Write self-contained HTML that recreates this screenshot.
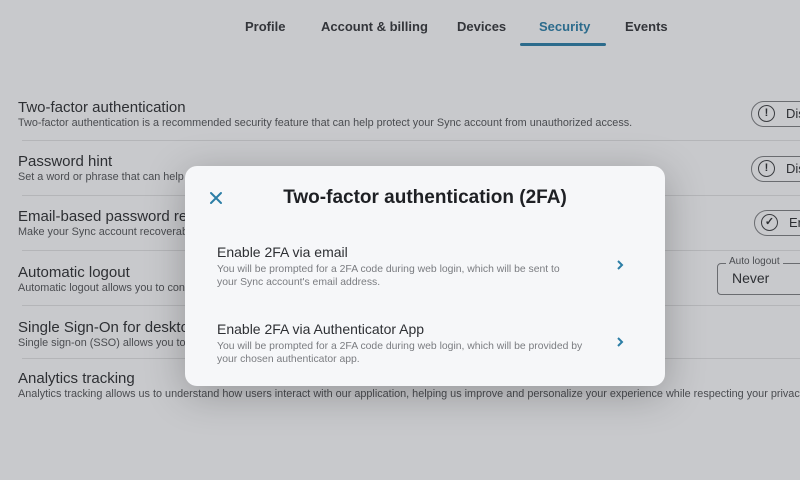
<!DOCTYPE html>
<html><head><meta charset="utf-8">
<style>
*{margin:0;padding:0;box-sizing:border-box}
html,body{width:800px;height:480px;overflow:hidden}
body{background:#c8c9cc;font-family:"Liberation Sans",sans-serif;position:relative;color:#2e3034}
.tab{position:absolute;top:19px;font-size:13px;font-weight:bold;color:#33353a}
.ul{position:absolute;left:520px;top:43px;width:86px;height:3px;background:#2c6b8c;border-radius:2px}
.row{position:absolute;left:18px}
.row .t{font-size:15px;color:#2d2f33;white-space:nowrap}
.row .d{font-size:10.85px;color:#4a4c50;white-space:nowrap;margin-top:1px}
.sep{position:absolute;left:22px;right:0;height:1px;background:#b4b5b8}
.pill{position:absolute;left:751px;width:70px;height:26px;border:1.5px solid #6a6c70;border-radius:14px;font-size:13px;color:#2d2f33;padding:4px 0 0 34px}
.pill .ic{position:absolute;left:6px;top:3px;width:17px;height:17px;border:1.5px solid #3a3c40;border-radius:50%;font-size:11px;font-weight:bold;text-align:center;line-height:14px}
.sel{position:absolute;left:717px;top:263px;width:100px;height:32px;border:1.5px solid #6a6c70;border-radius:4px}
.sel .l{position:absolute;left:8px;top:-8px;background:#c8c9cc;padding:0 3px;font-size:10px;color:#4a4c50}
.sel .v{position:absolute;left:14px;top:6px;font-size:14px;color:#2d2f33}
.modal{position:absolute;left:185px;top:166px;width:480px;height:220px;background:#f6f7f9;border-radius:12px;box-shadow:0 8px 40px rgba(0,0,0,.25)}
.mt{position:absolute;left:0;right:0;top:21px;text-align:center;font-size:19px;font-weight:bold;color:#1e2024}
.x{position:absolute;left:24px;top:25px}
.it{position:absolute;left:32px}
.it .t{font-size:14px;color:#2e3034}
.it .d{font-size:10.4px;color:#7a7c80;line-height:13px;margin-top:3px;width:368px}
.chev{position:absolute;left:430px}
</style></head><body>
<div class="tab" style="left:245px">Profile</div>
<div class="tab" style="left:321px">Account &amp; billing</div>
<div class="tab" style="left:457px">Devices</div>
<div class="tab" style="left:539px;color:#2c6b8c">Security</div>
<div class="tab" style="left:625px">Events</div>
<div class="ul"></div>

<div class="row" style="top:99px"><div class="t">Two-factor authentication</div><div class="d">Two-factor authentication is a recommended security feature that can help protect your Sync account from unauthorized access.</div></div>
<div class="sep" style="top:140px"></div>
<div class="row" style="top:153px"><div class="t">Password hint</div><div class="d">Set a word or phrase that can help you remember your password.</div></div>
<div class="sep" style="top:195px"></div>
<div class="row" style="top:208px"><div class="t">Email-based password recovery</div><div class="d">Make your Sync account recoverable by email if you forget your password.</div></div>
<div class="sep" style="top:250px"></div>
<div class="row" style="top:264px"><div class="t">Automatic logout</div><div class="d">Automatic logout allows you to control when you are logged out.</div></div>
<div class="sep" style="top:305px"></div>
<div class="row" style="top:319px"><div class="t">Single Sign-On for desktop</div><div class="d">Single sign-on (SSO) allows you to log in to the desktop app using your web browser session for your Sync account.</div></div>
<div class="sep" style="top:358px"></div>
<div class="row" style="top:370px"><div class="t">Analytics tracking</div><div class="d">Analytics tracking allows us to understand how users interact with our application, helping us improve and personalize your experience while respecting your privacy.</div></div>

<div class="pill" style="top:101px"><span class="ic">!</span>Disabled</div>
<div class="pill" style="top:156px"><span class="ic">!</span>Disabled</div>
<div class="pill" style="top:210px;left:754px"><span class="ic">✓</span>Enabled</div>
<div class="sel"><span class="l">Auto logout</span><span class="v">Never</span></div>

<div class="modal">
 <svg class="x" width="14" height="14" viewBox="0 0 14 14"><path d="M2 2L12 12M12 2L2 12" stroke="#2c7ea6" stroke-width="2" stroke-linecap="round"/></svg>
 <div class="mt">Two-factor authentication (2FA)</div>
 <div class="it" style="top:78px"><div class="t">Enable 2FA via email</div><div class="d" style="width:362px">You will be prompted for a 2FA code during web login, which will be sent to your Sync account's email address.</div></div>
 <svg class="chev" style="top:93px" width="10" height="12" viewBox="0 0 10 12"><path d="M3 2L7 6L3 10" stroke="#2c7ea6" stroke-width="2" fill="none"/></svg>
 <div class="it" style="top:155px"><div class="t">Enable 2FA via Authenticator App</div><div class="d">You will be prompted for a 2FA code during web login, which will be provided by your chosen authenticator app.</div></div>
 <svg class="chev" style="top:170px" width="10" height="12" viewBox="0 0 10 12"><path d="M3 2L7 6L3 10" stroke="#2c7ea6" stroke-width="2" fill="none"/></svg>
</div>
</body></html>
